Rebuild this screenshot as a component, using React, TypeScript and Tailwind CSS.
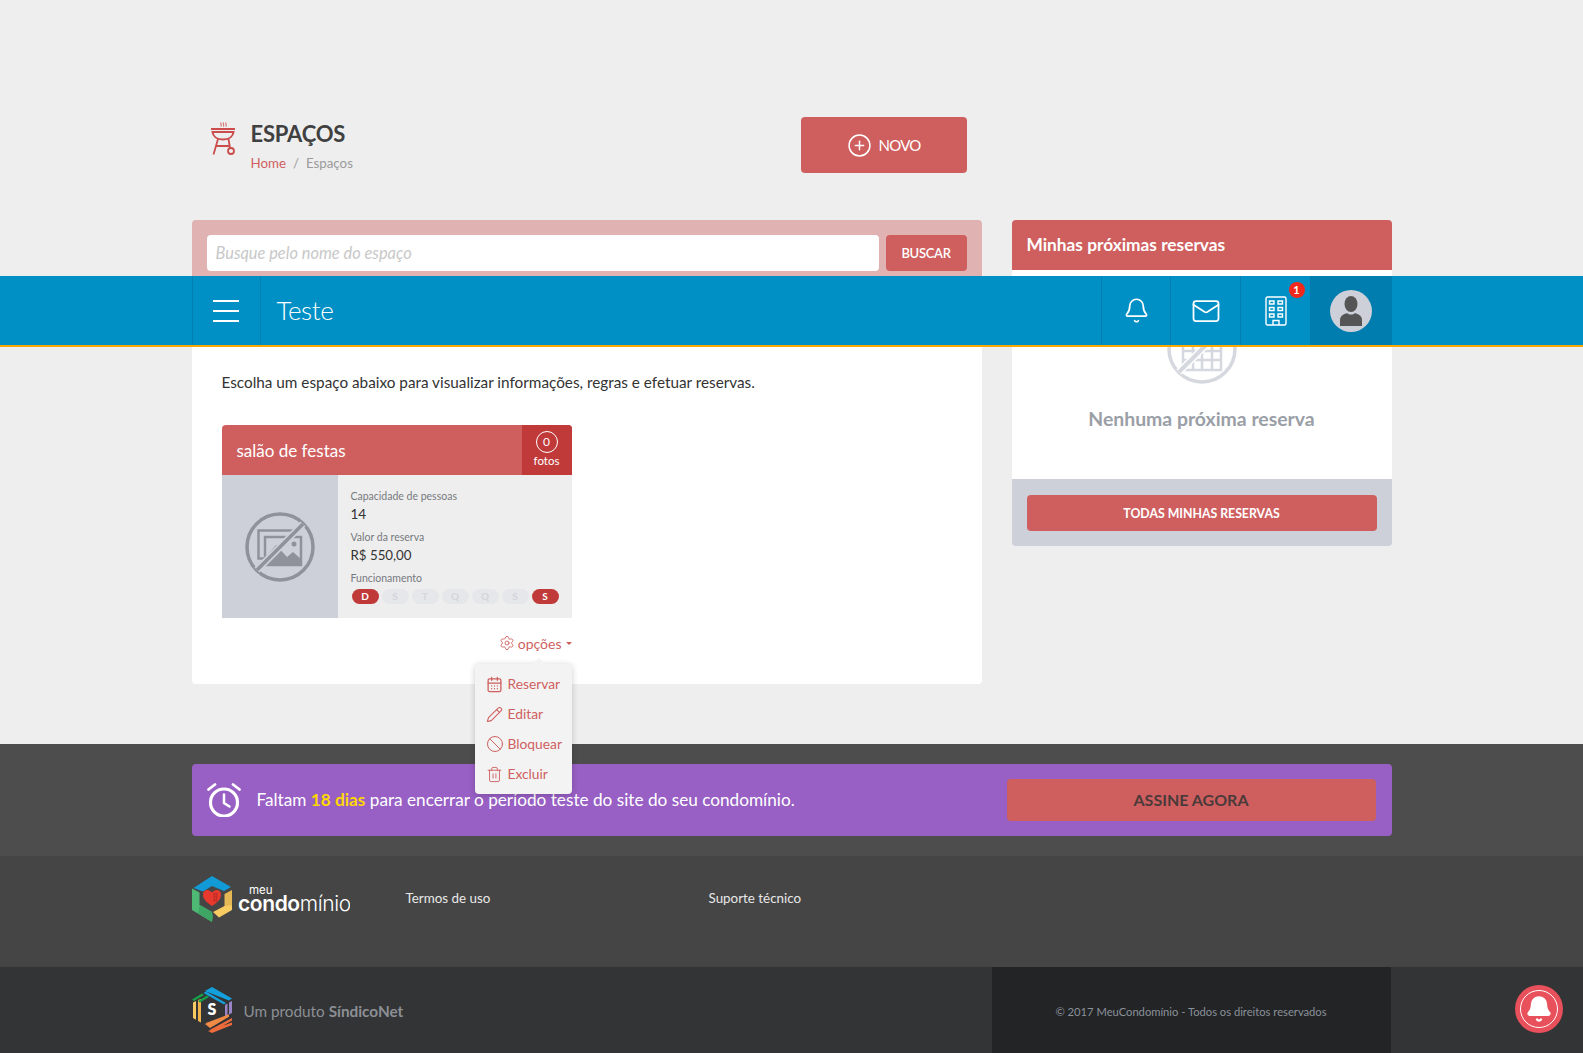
import { Bell, CalendarDays, Ban, Mail, Pencil, PlusCircle, Settings, Trash2 } from "lucide-react";

const days = [
  { label: "D", active: true },
  { label: "S", active: false },
  { label: "T", active: false },
  { label: "Q", active: false },
  { label: "Q", active: false },
  { label: "S", active: false },
  { label: "S", active: true },
];

function GrillIcon() {
  return (
    <svg width="26" height="33" viewBox="0 0 26 33" fill="none" stroke="#cc4c4c" strokeWidth="1.800">
      <path d="M11 0.500c-1 1.500 1 2 0 4M13.500 0.500c-1 1.500 1 2 0 4M16 0.500c-1 1.500 1 2 0 4" strokeWidth="1" />
      <path d="M1 7h24" strokeWidth="2" />
      <path d="M2.500 10h21c-.5 4-4 7.500-10.500 7.500S3 14 2.500 10z" strokeWidth="2" />
      <path d="M8 17L3.500 32.500M18.500 17l1.500 9M6 24h13" />
      <circle cx="21" cy="29" r="3" />
    </svg>
  );
}

function NoImageIcon() {
  return (
    <svg width="70" height="70" viewBox="0 0 70 70" fill="none" stroke="#8f929b">
      <circle cx="35" cy="35" r="33" strokeWidth="3.500" />
      <rect x="13.500" y="18.500" width="36" height="28" strokeWidth="2.500" />
      <rect x="20" y="25" width="36" height="28" fill="#cdd0d8" strokeWidth="2.500" />
      <path d="M20 53V46l11-13 11 12 6-5 8 7v6z" fill="#8f929b" stroke="none" />
      <circle cx="49" cy="32" r="2.500" fill="#8f929b" stroke="none" />
      <path d="M12 58L58 12" stroke="#cdd0d8" strokeWidth="7" />
      <path d="M12 58L58 12" strokeWidth="3.500" />
    </svg>
  );
}

function NoCalendarIcon() {
  return (
    <svg width="70" height="70" viewBox="0 0 70 70" fill="none" stroke="#d5d8de">
      <circle cx="35" cy="35" r="33" strokeWidth="3.500" />
      <path d="M16 14h38v42H16zM16 28h38M16 37h38M16 46h38M26 28v28M35 28v28M45 28v28" strokeWidth="2.500" />
      <path d="M12 58L58 12" stroke="#fff" strokeWidth="7" />
      <path d="M12 58L58 12" strokeWidth="4" />
    </svg>
  );
}

function AlarmIcon() {
  return (
    <svg width="34" height="34" viewBox="0 0 34 34" fill="none" stroke="#fff" strokeLinecap="round">
      <circle cx="17" cy="19.500" r="13.500" strokeWidth="3.200" />
      <path d="M17 11.500v8.500l5.500 3.500" strokeWidth="2.500" />
      <path d="M1.500 6.500L8 1.500M32.500 6.500L26 1.500" strokeWidth="2.800" />
    </svg>
  );
}

function BuildingIcon() {
  return (
    <svg width="22" height="30" viewBox="0 0 22 30" fill="none" stroke="#fff" strokeWidth="1.400">
      <rect x="1" y="1" width="20" height="28" rx="1.500" />
      <path d="M4.500 5h4.500v3H4.500zM13 5h4.500v3H13zM4.500 11.500h4.500v3H4.500zM13 11.500h4.500v3H13zM4.500 18h4.500v3H4.500zM13 18h4.500v3H13zM8 29v-4.500h6V29" />
    </svg>
  );
}

function MeuCondominioLogo() {
  return (
    <svg width="158" height="46" viewBox="0 0 158 46">
      <path d="M20 0l19 11-7 4-12-5-9 5.500L1.500 12z" fill="#129ad6" />
      <path d="M0 12.500l7.500 4V29l12.500 7-0.500 1.500L20 46 0 34z" fill="#4db974" />
      <path d="M8 29l12 7 1 4.500-1 5.500L6 37.500z" fill="#3ea565" />
      <path d="M40 14v15l-7.500 4V18z" fill="#e5b856" />
      <path d="M40 29v5L27 41.500 21 36l11.500-6z" fill="#f7cb62" />
      <path d="M20 16.500c-2-2-4-3-6.500-2-2.500 1-3 4-2 7 1 3 4.500 6 8.500 8.500 4-2.500 7.500-5.500 8.500-8.500 1-3 .5-6-2-7-2.500-1-4.500 0-6.500 2z" fill="#e8392f" />
      <path d="M21 18h5M21 21h5M21 24h4M22.500 17v9M24.500 17v9" stroke="#b92b25" strokeWidth="0.800" />
      <text x="57" y="18" fill="#fff" fontSize="11.500" fontFamily="Inter, sans-serif">meu</text>
      <text x="46" y="35" fill="#fff" fontSize="21" letterSpacing="-0.4" fontFamily="Inter, sans-serif">
        <tspan fontWeight="600">condo</tspan>
        <tspan fontWeight="300">mínio</tspan>
      </text>
    </svg>
  );
}

function SindicoLogo() {
  return (
    <svg width="40" height="46" viewBox="0 0 40 46" fill="none">
      <path d="M1 15.500V31l3 1.700V14z" fill="#f7cb62" />
      <path d="M6 13v21l3 1.500V12z" fill="#f0b34a" />
      <path d="M0 12.500L10 6.500l2 1.500-10 6zM6 14l9-5.500 2 1.500-9 5.500z" fill="#17a24a" />
      <path d="M13 4L20 0l20 11.500-3 2zM11.500 6L14 4.500l20 11.500-2 1.500z" fill="#13a0dc" />
      <path d="M33 18l2.500-1.500v12L33 30zM37 15.500l3-1.500v12l-3 1.500z" fill="#9985c5" />
      <path d="M40 31v2.500L21 44.500l-3-1.700zM40 35.500V38L20 46l-4-2z" fill="#ee6b3c" />
      <path d="M13 37l3-1.700 21-8v2.500L18 41z" fill="#f08a44" />
      <text x="20" y="28" fill="#fff" fontSize="16" fontWeight="800" textAnchor="middle" fontFamily="Lato, sans-serif">S</text>
    </svg>
  );
}

function Navbar() {
  return (
    <header className="absolute left-0 right-0 top-[276px] z-20 h-[71px] border-b-2 border-[#f7a900] bg-[#0090c5]">
      <div className="mx-auto flex h-full w-[1200px] items-stretch">
        <div className="flex w-[69px] flex-col items-center justify-center gap-[8px] border-x border-[#0081b2]">
          <span className="h-[2px] w-[26px] bg-white" />
          <span className="h-[2px] w-[26px] bg-white" />
          <span className="h-[2px] w-[26px] bg-white" />
        </div>
        <div className="flex flex-1 items-center pb-[1px] pl-[16px] text-[26px] font-light tracking-[-0.4px] text-white">Teste</div>
        <div className="flex w-[69px] items-center justify-center border-l border-[#0081b2] pl-[1px]">
          <Bell size={27} strokeWidth={1.500} className="text-white" />
        </div>
        <div className="flex w-[70px] items-center justify-center border-l border-[#0081b2] pl-[2px]">
          <Mail size={30} strokeWidth={1.400} className="text-white" />
        </div>
        <div className="relative flex w-[70px] items-center justify-center border-l border-[#0081b2] pl-[2px]">
          <BuildingIcon />
          <span className="absolute left-[48px] top-[6px] flex h-[16px] w-[16px] items-center justify-center rounded-full bg-[#f3281c] text-[11px] font-bold text-white">1</span>
        </div>
        <div className="flex w-[82px] items-center justify-center bg-[#007daf]">
          <div className="flex h-[42px] w-[42px] items-center justify-center rounded-full bg-[#cdd0d8]">
            <svg width="24" height="30" viewBox="0 0 24 30" fill="#555">
              <ellipse cx="12" cy="8" rx="6.500" ry="8" />
              <path d="M1 30v-6c0-5 5-6 7-7 2 2 6 2 8 0 2 1 7 2 7 7v6z" />
            </svg>
          </div>
        </div>
      </div>
    </header>
  );
}

function SpaceCard() {
  return (
    <div className="w-[350px]">
      <div className="flex h-[50px] overflow-hidden rounded-t bg-[#cf5f5f] text-white">
        <div className="flex flex-1 items-center pl-[15px] pt-[1px] text-[17px]">salão de festas</div>
        <div className="flex w-[50px] flex-col items-center bg-[#c13a3a] pt-[6px]">
          <span className="flex h-[22px] w-[22px] items-center justify-center rounded-full border border-white text-[12px] leading-none">0</span>
          <span className="text-[11.500px] leading-[16px]">fotos</span>
        </div>
      </div>
      <div className="flex h-[143px] bg-[#eeeeee]">
        <div className="flex w-[116px] items-center justify-center bg-[#cdd0d8]">
          <NoImageIcon />
        </div>
        <div className="flex-1 pl-[13px] pt-[13px]">
          <div className="text-[10.500px] leading-[16px] text-[#77797e]">Capacidade de pessoas</div>
          <div className="text-[13.500px] leading-[20px] text-[#333]">14</div>
          <div className="mt-[5px] text-[10.500px] leading-[16px] text-[#77797e]">Valor da reserva</div>
          <div className="pt-[1px] text-[13.300px] leading-[19px] text-[#333]">R$ 550,00</div>
          <div className="mt-[5px] text-[10.500px] leading-[16px] text-[#77797e]">Funcionamento</div>
          <div className="mt-[3px] flex gap-[3px] pl-[1px]">
            {days.map((day, i) =>
              day.active ? (
                <span key={i} className="flex h-[15px] w-[27px] items-center justify-center rounded-full bg-[#c13a3a] text-[10px] font-bold text-white">
                  {day.label}
                </span>
              ) : (
                <span key={i} className="flex h-[15px] w-[27px] items-center justify-center rounded-full bg-[#e6e7ea] text-[10px] font-bold text-[#d3d5da]">
                  {day.label}
                </span>
              )
            )}
          </div>
        </div>
      </div>
      <div className="relative mt-[16px] flex h-[20px] items-center justify-end pb-[2px] text-[14px] text-[#cf5f5f]">
        <Settings size={16} strokeWidth={1.300} className="mr-[3px]" />
        <span>opções</span>
        <span className="ml-[4px] h-0 w-0 border-x-[3.500px] border-t-[3.500px] border-x-transparent border-t-[#cf5f5f]" />
        <OptionsMenu />
      </div>
    </div>
  );
}

function OptionsMenu() {
  const items = [
    { label: "Reservar", icon: <CalendarDays size={17} strokeWidth={1.800} /> },
    { label: "Editar", icon: <Pencil size={17} strokeWidth={1.500} /> },
    { label: "Bloquear", icon: <Ban size={18} strokeWidth={1.300} /> },
    { label: "Excluir", icon: <Trash2 size={17} strokeWidth={1.300} /> },
  ];
  return (
    <div className="absolute right-0 top-[30px] z-30 h-[130px] w-[97px] rounded bg-[#f3f3f3] py-[5px] shadow-[0_1px_6px_rgba(0,0,0,0.2)]">
      <span className="absolute left-[57px] top-[-6px] h-0 w-0 border-x-[7px] border-b-[6px] border-x-transparent border-b-[#f3f3f3]" />
      {items.map((item) => (
        <div key={item.label} className="flex h-[30px] items-center text-[13.800px] text-[#cf5f5f]">
          <span className="flex w-[33px] justify-center pl-[7px]">{item.icon}</span>
          <span>{item.label}</span>
        </div>
      ))}
    </div>
  );
}

export default function App() {
  return (
    <div className="relative min-h-[1053px] bg-[#eeeeee] text-[#333] [font-family:Lato,sans-serif]">
      <Navbar />

      <div className="mx-auto w-[1200px] pt-[117px]">
        {/* Page title */}
        <div className="flex h-[56px] w-[775px] justify-between pl-[18px]">
          <div className="flex gap-[15px] pt-[5px]">
            <GrillIcon />
            <div className="-mt-[3px]">
              <h1 className="text-[22px] font-bold leading-[30px] tracking-[-0.2px] text-[#404040]">ESPAÇOS</h1>
              <div className="mt-[4px] text-[13.300px] leading-[20px] text-[#9a9a9a]">
                <span className="text-[#cf5f5f]">Home</span>
                <span className="mx-[7px]">/</span>
                <span>Espaços</span>
              </div>
            </div>
          </div>
          <button className="flex h-[56px] w-[166px] items-center justify-center gap-[6px] rounded bg-[#cf5f5f] pl-[1px] text-[15px] tracking-[-0.7px] text-white">
            <PlusCircle size={25} strokeWidth={1.400} />
            NOVO
          </button>
        </div>

        <div className="mt-[47px] flex gap-[30px]">
          {/* Main column */}
          <div className="w-[790px]">
            <div className="flex h-[66px] gap-[7px] rounded-t bg-[#e0b2b2] p-[15px]">
              <input
                readOnly
                placeholder="Busque pelo nome do espaço"
                className="h-[36px] flex-1 rounded bg-white px-[9px] pb-[1px] text-[16.400px] italic placeholder:text-[#c8c8c8]"
              />
              <button className="h-[36px] w-[81px] rounded bg-[#cf5f5f] pt-[1px] text-[13px] font-semibold tracking-[-0.3px] text-white">BUSCAR</button>
            </div>
            <div className="rounded-b bg-white px-[30px] pb-[30px] pt-[84px]">
              <p className="text-[15.300px] leading-[24px] text-[#333]">Escolha um espaço abaixo para visualizar informações, regras e efetuar reservas.</p>
              <div className="mt-[31px]">
                <SpaceCard />
              </div>
            </div>
          </div>

          {/* Sidebar */}
          <aside className="h-[326px] w-[380px]">
            <div className="flex h-[50px] items-center rounded-t bg-[#cf5f5f] pl-[15px] text-[17.300px] font-bold text-white">Minhas próximas reservas</div>
            <div className="flex h-[209px] flex-col items-center bg-white pt-[44px]">
              <NoCalendarIcon />
              <div className="mt-[20px] text-[19.400px] font-bold leading-[30px] text-[#9a9ea6]">Nenhuma próxima reserva</div>
            </div>
            <div className="h-[67px] rounded-b bg-[#cdd0d8] px-[15px] pt-[16px]">
              <button className="h-[36px] w-full rounded bg-[#cf5f5f] pt-[2px] text-[12.300px] font-bold text-white">TODAS MINHAS RESERVAS</button>
            </div>
          </aside>
        </div>
      </div>

      {/* Trial banner */}
      <section className="mt-[60px] bg-[#4d4d4d] py-[20px]">
        <div className="mx-auto flex h-[72px] w-[1200px] items-center rounded bg-[#985fc4] pl-[15px] pr-[16px]">
          <AlarmIcon />
          <p className="ml-[16px] flex-1 pb-[1px] text-[17.200px] text-white">
            Faltam <b className="text-[#ffd800]">18 dias</b> para encerrar o período teste do site do seu condomínio.
          </p>
          <button className="h-[42px] w-[369px] rounded bg-[#cf5f5f] text-[16px] font-bold text-[#4a3a3a]">ASSINE AGORA</button>
        </div>
      </section>

      {/* Footer links */}
      <section className="h-[111px] bg-[#454545]">
        <div className="mx-auto flex w-[1200px] pt-[20px] text-[13.400px] text-[#e8e8e8]">
          <div className="w-[214px]">
            <MeuCondominioLogo />
          </div>
          <div className="w-[303px] pt-[12px]">Termos de uso</div>
          <div className="pt-[12px]">Suporte técnico</div>
        </div>
      </section>

      {/* Bottom bar */}
      <footer className="h-[86px] bg-[#333436]">
        <div className="mx-auto flex h-full w-[1200px] items-center">
          <SindicoLogo />
          <span className="ml-[12px] flex-1 pt-[2px] text-[15.300px] text-[#8c8f94]">
            Um produto <b>SíndicoNet</b>
          </span>
          <div className="mr-[1px] flex h-full w-[399px] items-center justify-center bg-[#232426] pt-[4px] text-[11.200px] text-[#8a9199]">© 2017 MeuCondomínio - Todos os direitos reservados</div>
        </div>
      </footer>

      <div className="absolute left-[1515px] top-[985px] z-30 flex h-[48px] w-[48px] items-center justify-center rounded-full bg-[#e8505b]">
        <div className="flex h-[38px] w-[38px] items-center justify-center rounded-full border border-white">
          <Bell size={28} fill="#fff" className="text-white" />
        </div>
      </div>
    </div>
  );
}
